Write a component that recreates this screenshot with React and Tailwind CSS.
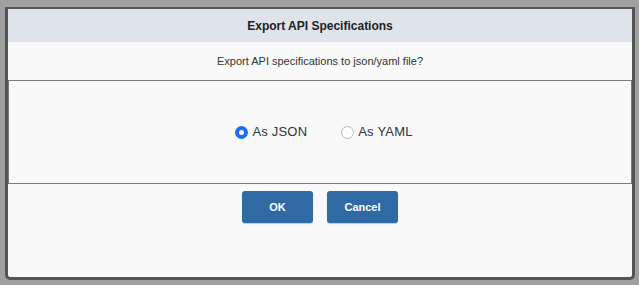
export default function App() {
  return (
    <div className="w-[639px] h-[285px] bg-[#a0a0a0] pt-[7px] pl-[5px]" style={{ fontFamily: '"Liberation Sans", Arial, sans-serif' }}>
      <div className="w-[630px] h-[273px] border-t-2 border-l-[3px] border-r-[3px] border-b-[3px] border-[#555] rounded-b-[5px] bg-[#f9f9f9] overflow-hidden flex flex-col">
        <div className="h-[33px] bg-[#dfe3ec] flex items-center justify-center text-[12px] font-bold text-[#222]">
          Export API Specifications
        </div>
        <div className="h-[38px] flex items-center justify-center text-[11px] text-[#333]">
          Export API specifications to json/yaml file?
        </div>
        <div className="h-[104px] border border-[#7a7a7a] flex items-center justify-center pl-[8px] text-[13px] text-[#333]">
          <label className="flex items-center gap-[4px]">
            <span className="w-[13px] h-[13px] rounded-full bg-[#1a6ff5] flex items-center justify-center">
              <span className="w-[5px] h-[5px] rounded-full bg-white"></span>
            </span>
            <span className="tracking-[0.2px]">As JSON</span>
          </label>
          <label className="flex items-center gap-[4px] ml-[34px]">
            <span className="w-[13px] h-[13px] rounded-full bg-white border border-[#b8b8b8]"></span>
            <span className="tracking-[0.2px]">As YAML</span>
          </label>
        </div>
        <div className="flex justify-center gap-[14px] mt-[7px]">
          <button className="w-[71px] h-[32px] rounded-[3px] bg-[#2f6aa5] text-white text-[11px] font-bold shadow-[0_1px_1px_rgba(0,0,0,0.2)]">OK</button>
          <button className="w-[71px] h-[32px] rounded-[3px] bg-[#2f6aa5] text-white text-[11px] font-bold shadow-[0_1px_1px_rgba(0,0,0,0.2)]">Cancel</button>
        </div>
      </div>
    </div>
  );
}
